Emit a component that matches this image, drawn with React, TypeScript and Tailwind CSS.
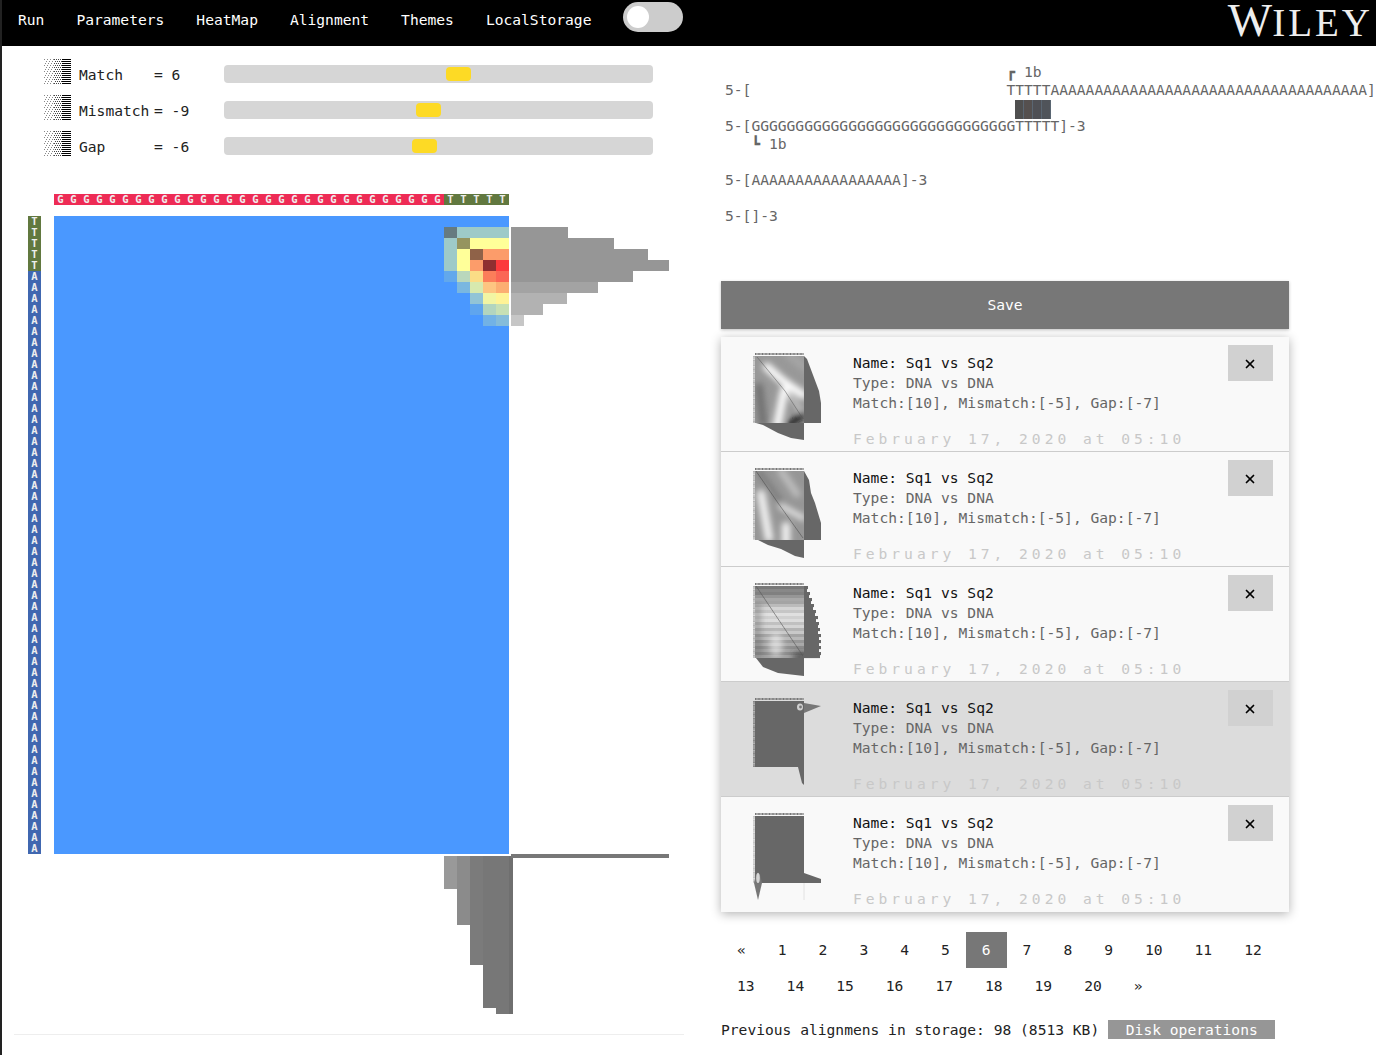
import { X } from "lucide-react";

const BLUE = "#4a98ff";

const navItems = ["Run", "Parameters", "HeatMap", "Alignment", "Themes", "LocalStorage"];

const sliders = [
    { label: "Match", value: "= 6", thumb: 222 },
    { label: "Mismatch", value: "= -9", thumb: 192 },
    { label: "Gap", value: "= -6", thumb: 188 },
];

const heat = [
    ["#667b80", "#9ecac8", "#9ecac8", "#9ecac8", "#9ecac8"],
    ["#9ecac8", "#95945f", "#ffff99", "#ffff99", "#ffff99"],
    ["#9ecac8", "#ffff99", "#8f6248", "#fc9c6a", "#fc9c6a"],
    ["#9ecac8", "#ffff99", "#fc9c6a", "#8f2f31", "#fc3a3c"],
    ["#62a8ec", "#b9d7bc", "#fbdd86", "#fb7e5a", "#fb6655"],
    [BLUE, "#7ab7e0", "#d7e9ae", "#fdc581", "#fcae72"],
    [BLUE, BLUE, "#92c4d6", "#f2f5a3", "#fff396"],
    [BLUE, BLUE, "#5fa5ee", "#b2d5bf", "#c7e0b4"],
    [BLUE, BLUE, BLUE, "#72b2e6", "#85bcda"],
];

const sideBars = [
    { w: 57, c: "#969696" },
    { w: 103, c: "#969696" },
    { w: 137, c: "#969696" },
    { w: 158, c: "#969696" },
    { w: 122, c: "#969696" },
    { w: 87, c: "#a3a3a3" },
    { w: 56, c: "#b2b2b2" },
    { w: 32, c: "#b2b2b2" },
    { w: 13, c: "#c6c6c6" },
];

const bottomBars = [
    { h: 33, c: "#999999" },
    { h: 69, c: "#8b8b8b" },
    { h: 109, c: "#7b7b7b" },
    { h: 152, c: "#777777" },
    { h: 158, c: "#777777" },
];

const rowSeq = [...Array(5).fill("T"), ...Array(53).fill("A")];
const colSeq = [...Array(30).fill("G"), ...Array(5).fill("T")];

const pageRows = [
    ["«", "1", "2", "3", "4", "5", "6", "7", "8", "9", "10", "11", "12"],
    ["13", "14", "15", "16", "17", "18", "19", "20", "»"],
];

function Dither() {
    const dots: { x: number; y: number; c: string }[] = [];
    for (let y = 0; y < 26; y += 2) {
        for (let x = 0; x < 27; x++) {
            if (x >= 18) dots.push({ x, y, c: "#000" });
            else if (x >= 10 && (x + y / 2) % 2 === 0) dots.push({ x, y, c: "#444" });
            else if (x < 10 && (x + y / 2) % 3 === 0) dots.push({ x, y, c: "#888" });
        }
    }
    return (
        <svg width="27" height="26" className="shrink-0 -mt-[5px]" shapeRendering="crispEdges">
            {dots.map((d, i) => (
                <rect key={i} x={d.x} y={d.y} width="1" height="1" fill={d.c} />
            ))}
        </svg>
    );
}

function ThumbFrame({ id, main, light, children }: { id: string; main: number; light?: string; children: React.ReactNode }) {
    return (
        <svg width="68" height="95" viewBox="0 0 68 95" className="shrink-0">
            <defs>
                <filter id={`${id}b`} x="-30%" y="-30%" width="160%" height="160%">
                    <feGaussianBlur stdDeviation="3.4" />
                </filter>
                <clipPath id={`${id}c`}>
                    <rect x="2" y="3" width="49" height={main} />
                </clipPath>
            </defs>
            <line x1="2" y1="1" x2="51" y2="1" stroke="#777" strokeWidth="2" strokeDasharray="1 0.4" />
            <line x1="1" y1="3" x2="1" y2={3 + main} stroke={light ?? "#b5b5b5"} strokeWidth="2" strokeDasharray="1 0.3" />
            {children}
        </svg>
    );
}

function Thumb({ kind }: { kind: number }) {
    const id = `t${kind}`;
    if (kind === 0) {
        return (
            <ThumbFrame id={id} main={67}>
                <g clipPath={`url(#${id}c)`}>
                    <rect x="2" y="3" width="49" height="67" fill="#989898" />
                    <g filter={`url(#${id}b)`} fill="none" strokeLinecap="round">
                        <path d="M14 14 L30 28 L50 42" stroke="#ffffff" strokeWidth="8" />
                        <path d="M31 38 L24 74" stroke="#ffffff" strokeWidth="8" />
                        <path d="M36 40 L48 58" stroke="#e0e0e0" strokeWidth="3" />
                        <path d="M6 34 L10 70" stroke="#707070" strokeWidth="8" />
                        <path d="M36 2 L54 16" stroke="#a6a6a6" strokeWidth="8" />
                        <path d="M36 72 L50 62" stroke="#111" strokeWidth="6" />
                    </g>
                    <path d="M4 4 L32 38 L50 66" stroke="#555" strokeWidth="0.5" fill="none" />
                </g>
                <path d="M51 3 L54 6 L60 22 L66 38 L68 50 L68 70 L51 70 Z" fill="#676767" />
                <path d="M3 70 L10 72 L25 80 L38 85 L51 87 L51 70 Z" fill="#676767" />
            </ThumbFrame>
        );
    }
    if (kind === 1) {
        return (
            <ThumbFrame id={id} main={69}>
                <g clipPath={`url(#${id}c)`}>
                    <rect x="2" y="3" width="49" height="69" fill="#969696" />
                    <g filter={`url(#${id}b)`} fill="none" strokeLinecap="round">
                        <path d="M8 26 L16 70" stroke="#f5f5f5" strokeWidth="8" />
                        <path d="M28 38 L50 50" stroke="#ececec" strokeWidth="5" />
                        <path d="M28 3 L44 26" stroke="#c0c0c0" strokeWidth="7" />
                        <path d="M33 58 L33 74" stroke="#f5f5f5" strokeWidth="8" />
                        <path d="M6 3 L28 34" stroke="#666" strokeWidth="3" />
                    </g>
                    <path d="M3 3 L25 35 L50 70" stroke="#444" strokeWidth="0.5" fill="none" />
                </g>
                <path d="M51 3 L56 12 L58 25 L62 35 L65 45 L68 55 L68 72 L51 72 Z" fill="#676767" />
                <path d="M5 72 L15 77 L28 81 L42 88 L51 90 L51 72 Z" fill="#676767" />
            </ThumbFrame>
        );
    }
    if (kind === 2) {
        const stripes = ["#787878", "#888888", "#808080", "#969696", "#a8a8a8", "#a4a4a4", "#bbb", "#d4d4d4", "#c6c6c6", "#e0e0e0", "#d0d0d0", "#dcdcdc", "#c0c0c0", "#d4d4d4", "#b4b4b4", "#c8c8c8", "#a4a4a4", "#b8b8b8", "#989898", "#aaa", "#909090", "#a0a0a0", "#8a8a8a", "#a0a0a0"];
        const teeth = [55, 54, 57, 56, 59, 58, 61, 60, 63, 62, 65, 63, 66, 65, 67, 65, 68, 66, 68, 66, 68, 66, 68, 67];
        return (
            <ThumbFrame id={id} main={72}>
                <g clipPath={`url(#${id}c)`}>
                    {stripes.map((c, i) => (
                        <rect key={i} x="2" y={3 + i * 3} width="49" height="3.1" fill={c} />
                    ))}
                    <g filter={`url(#${id}b)`}>
                        <rect x="0" y="20" width="8" height="55" fill="#666" opacity="0.45" />
                        <ellipse cx="23" cy="62" rx="7" ry="12" fill="#fff" opacity="0.55" />
                        <ellipse cx="48" cy="74" rx="9" ry="6" fill="#333" opacity="0.6" />
                    </g>
                    <path d="M3 3 L50 73" stroke="#555" strokeWidth="0.6" fill="none" />
                </g>
                {teeth.map((w, i) => (
                    <rect key={i} x="51" y={3 + i * 3} width={w - 51} height="3.1" fill="#676767" />
                ))}
                <path d="M3 75 L10 84 L25 90 L51 93 L51 75 Z" fill="#676767" />
            </ThumbFrame>
        );
    }
    if (kind === 3) {
        return (
            <ThumbFrame id={id} main={66} light="#888">
                <rect x="2" y="3" width="49" height="66" fill="#676767" />
                <ellipse cx="47" cy="9" rx="3" ry="3.5" fill="#d0d0d0" />
                <circle cx="47.5" cy="9" r="1.4" fill="#777" />
                <path d="M51 5 L68 8 L51 15 Z" fill="#777" />
                <path d="M45 69 L51 69 L51 87 L49 85 Z" fill="#676767" />
            </ThumbFrame>
        );
    }
    return (
        <ThumbFrame id={id} main={67} light="#c5c5c5">
            <rect x="2" y="3" width="49" height="67" fill="#676767" />
            <path d="M1 70 L5 87 L9 70 L7 62 L5 59 L3 62 Z" fill="#777" />
            <ellipse cx="5" cy="65" rx="1.8" ry="5" fill="#d5d5d5" />
            <path d="M51 60 L68 66 L68 70 L51 70 Z" fill="#676767" />
            <line x1="51" y1="70" x2="51" y2="87" stroke="#ddd" strokeWidth="0.8" />
        </ThumbFrame>
    );
}

function AlignmentText() {
    return (
        <div className="pl-1 pt-[17px] text-[#666] leading-[18px] whitespace-pre">
            <div className="h-[18px]">{" ".repeat(32)}┏ 1b</div>
            <div className="h-[18px]">{"5-[" + " ".repeat(29) + "TTTTT" + "A".repeat(36) + "]"}</div>
            <div className="flex h-[18px] pl-[290.4px] mt-px -mb-px">
                {["#4f4f4f", "#55504f", "#4f5055", "#50545a"].map((c, i) => (
                    <div key={i} className="w-[8.8px] h-[19px] border-r border-[#5a6672]" style={{ background: c }} />
                ))}
            </div>
            <div className="h-[18px]">{"5-[" + "G".repeat(30) + "TTTTT]-3"}</div>
            <div className="h-[18px]">{"   ┗ 1b"}</div>
            <div className="h-[18px]" />
            <div className="h-[18px]">{"5-[" + "A".repeat(17) + "]-3"}</div>
            <div className="h-[18px]" />
            <div className="h-[18px]">5-[]-3</div>
        </div>
    );
}

export default function App() {
    return (
        <div className="h-[1055px] overflow-hidden border-l-2 border-[#222] bg-white text-[14.62px] text-[#222] font-['DejaVu_Sans_Mono',monospace]">
            <header className="flex h-[46px] items-start justify-between bg-black text-white">
                <nav className="flex items-start">
                    {navItems.map(item => (
                        <a key={item} className="px-4 pt-[9px] leading-[22px]">{item}</a>
                    ))}
                    <div className="ml-4 mt-[2px] flex h-[30px] w-[60px] items-center rounded-full bg-[#ccc] pl-1">
                        <div className="h-[22px] w-[22px] rounded-full bg-white" />
                    </div>
                </nav>
                <div className="mr-[3px] mt-px flex items-baseline font-['Liberation_Serif',serif] text-[#eee]">
                    <span className="text-[47px] leading-[38px]">W</span>
                    <span className="text-[39px] leading-[38px] tracking-[3px]">ILEY</span>
                </div>
            </header>

            <main className="flex">
                <section className="w-[719px] shrink-0 pt-[10px]">
                    {sliders.map(s => (
                        <div key={s.label} className="flex h-9 items-center pl-[42px]">
                            <Dither />
                            <span className="ml-2 mt-0.5 w-[75px] shrink-0">{s.label}</span>
                            <span className="mt-0.5 w-[70px] shrink-0">{s.value}</span>
                            <div className="flex h-[18px] w-[429px] items-center rounded bg-[#d6d6d6]">
                                <div className="h-[14px] w-[25px] rounded bg-[#fdda25]" style={{ marginLeft: s.thumb }} />
                            </div>
                        </div>
                    ))}

                    <div className="ml-[52px] mt-[30px] flex h-[11px] w-[455px] text-[10.5px] font-bold leading-[11px] text-[#eee]">
                        {colSeq.map((c, i) => (
                            <span key={i} className={`w-[13px] text-center ${c === "G" ? "bg-[#ee2b55]" : "bg-[#61783f]"}`}>{c}</span>
                        ))}
                    </div>

                    <div className="mt-[11px] flex items-start pl-[26px]">
                        <div className="flex w-[13px] flex-col text-[10.5px] font-bold leading-[11px] text-[#eee]">
                            {rowSeq.map((c, i) => (
                                <span key={i} className={`h-[11px] text-center ${c === "T" ? "bg-[#61783f]" : "bg-[#4067b0]"}`}>{c}</span>
                            ))}
                        </div>
                        <div className="ml-[13px] flex h-[638px] w-[455px] justify-end bg-[#4a98ff] pt-[11px]">
                            <div className="grid h-[99px] w-[65px] grid-cols-5 grid-rows-9">
                                {heat.flat().map((c, i) => (
                                    <div key={i} style={{ background: c }} />
                                ))}
                            </div>
                        </div>
                        <div className="ml-[2px] flex flex-col pt-[11px]">
                            {sideBars.map((b, i) => (
                                <div key={i} className="h-[11px]" style={{ width: b.w, background: b.c }} />
                            ))}
                        </div>
                    </div>

                    <div className="flex items-start pl-[442px]">
                        {bottomBars.map((b, i) => (
                            <div key={i} className="mt-[2px] w-[13px]" style={{ height: b.h, background: b.c }} />
                        ))}
                        <div className="mt-[2px] h-[158px] w-[2px] bg-[#6f6f6f]" />
                        <div className="w-[158px]">
                            <div className="h-1 bg-[#777]" />
                            <div className="h-[156px] w-[2px] bg-[#6f6f6f]" />
                        </div>
                    </div>

                    <div className="ml-3 mt-5 h-px w-[670px] bg-[#eee]" />
                </section>

                <section className="w-[568px] shrink-0">
                    <AlignmentText />

                    <button className="mt-14 h-12 w-full bg-[#777] text-white shadow-[0_1px_3px_rgba(0,0,0,0.25)]">Save</button>

                    <div className="mt-2 shadow-[0_2px_10px_rgba(0,0,0,0.3)]">
                        {[0, 1, 2, 3, 4].map(k => (
                            <div key={k} className={`flex h-[115px] overflow-hidden pl-8 pt-4 ${k < 4 ? "border-b border-[#ccc]" : ""} ${k === 3 ? "bg-[#dcdcdc]" : "bg-[#f9f9f9]"}`}>
                                <Thumb kind={k} />
                                <div className="ml-8 flex-1 leading-5 text-[#666]">
                                    <div className="text-[#111]">Name: Sq1 vs Sq2</div>
                                    <div>Type: DNA vs DNA</div>
                                    <div>Match:[10], Mismatch:[-5], Gap:[-7]</div>
                                    <div className="mt-4 tracking-[3.98px] text-[#c8c8c8]">February 17, 2020 at 05:10</div>
                                </div>
                                <button className="mr-4 -mt-2 flex h-9 w-[45px] items-center justify-center bg-[#d1d1d1] text-black">
                                    <X size={14} strokeWidth={3} className="mt-px -ml-px" />
                                </button>
                            </div>
                        ))}
                    </div>

                    <div className="mt-5">
                        {pageRows.map((row, r) => (
                            <div key={r} className="flex h-9">
                                {row.map(p => (
                                    <a key={p} className={`flex items-center px-4 ${p === "6" ? "bg-[#777] text-white" : "text-[#222]"}`}>{p}</a>
                                ))}
                            </div>
                        ))}
                    </div>

                    <div className="mt-4 flex h-[19px] items-center whitespace-pre">
                        <span>Previous alignmens in storage: 98 (8513 KB)</span>
                        <span className="ml-[9px] bg-[#969696] px-[17.6px] leading-[19px] text-white">Disk operations</span>
                    </div>
                </section>
            </main>
        </div>
    );
}
